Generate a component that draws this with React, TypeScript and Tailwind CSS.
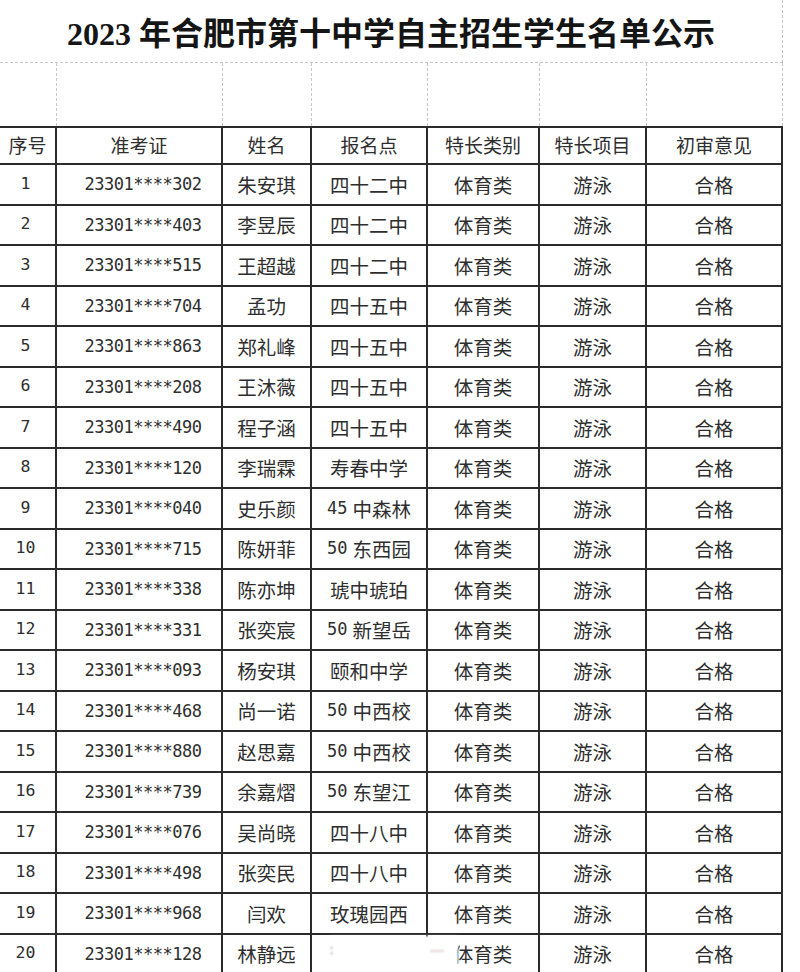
import React from "react";

const rows: [string, string, string][] = [
  ["302", "朱安琪", "四十二中"],
  ["403", "李昱辰", "四十二中"],
  ["515", "王超越", "四十二中"],
  ["704", "孟功", "四十五中"],
  ["863", "郑礼峰", "四十五中"],
  ["208", "王沐薇", "四十五中"],
  ["490", "程子涵", "四十五中"],
  ["120", "李瑞霖", "寿春中学"],
  ["040", "史乐颜", "45 中森林"],
  ["715", "陈妍菲", "50 东西园"],
  ["338", "陈亦坤", "琥中琥珀"],
  ["331", "张奕宸", "50 新望岳"],
  ["093", "杨安琪", "颐和中学"],
  ["468", "尚一诺", "50 中西校"],
  ["880", "赵思嘉", "50 中西校"],
  ["739", "余嘉熠", "50 东望江"],
  ["076", "吴尚晓", "四十八中"],
  ["498", "张奕民", "四十八中"],
  ["968", "闫欢", "玫瑰园西"],
  ["128", "林静远", ""],
];

const cols = "grid grid-cols-[57px_166px_89px_116px_112px_107px_136px] w-[783px]";
const cjk = "font-['Noto_Sans_CJK_SC',sans-serif]";
const mono = "font-['DejaVu_Sans_Mono','Liberation_Mono',monospace]";
const cell = "flex items-center justify-center border-r-2 border-b-2 border-[#2b2b2b] text-[#2e2e2e]";

export default function App() {
  const headers = ["序号", "准考证", "姓名", "报名点", "特长类别", "特长项目", "初审意见"];
  return (
    <div className="relative w-[800px] h-[972px] overflow-hidden bg-white">
      <div className="w-[783px] h-[63px] flex items-center justify-center border-b border-r border-dashed border-[#c8c8c8]">
        <h1 className={`${cjk} text-[32px] font-bold text-[#151515] leading-none pt-[2px]`}>
          <span className="font-['Liberation_Serif',serif] mr-[8px]">2023</span>
          年合肥市第十中学自主招生学生名单公示
        </h1>
      </div>
      <div className={`${cols} h-[63px]`}>
        {headers.map((h) => (
          <div key={h} className="border-r border-dashed border-[#c8c8c8]" />
        ))}
      </div>
      <div className={`${cols} h-[39px] border-t-2 border-[#2b2b2b]`}>
        {headers.map((h) => (
          <div key={h} className={`${cell} ${cjk} text-[19px]`}>
            {h}
          </div>
        ))}
      </div>
      {rows.map(([id, name, place], i) => (
        <div key={i} className={`${cols} h-[40.5px]`}>
          <div className={`${cell} ${mono} text-[16.5px] pr-[4px]`}>{i + 1}</div>
          <div className={`${cell} ${mono} text-[17px] tracking-[-0.5px] pl-[8px] pt-[1px]`}>23301****{id}</div>
          <div className={`${cell} ${cjk} text-[19.5px]`}>{name}</div>
          <div className={`${cell} ${cjk} text-[19.5px]`}>
            {place.split(/(\d+ )/).map((p, k) =>
              /\d/.test(p) ? (
                <span key={k} className={`${mono} text-[17px] mr-[5px]`}>
                  {p.trim()}
                </span>
              ) : (
                <span key={k}>{p}</span>
              )
            )}
          </div>
          <div className={`${cell} ${cjk} text-[19.5px]`}>体育类</div>
          <div className={`${cell} ${cjk} text-[19.5px]`}>游泳</div>
          <div className={`${cell} ${cjk} text-[19.5px]`}>合格</div>
        </div>
      ))}
      <div className="absolute left-[330px] top-[936px] w-[128px] h-[40px] bg-white blur-[1px]">
        <div className="absolute left-[0px] top-[8px] text-[#777] text-[12px] leading-none">:</div>
        <div className="absolute left-[100px] top-[14px] w-[14px] h-[2px] bg-[#e7d4d4]" />
      </div>
    </div>
  );
}
